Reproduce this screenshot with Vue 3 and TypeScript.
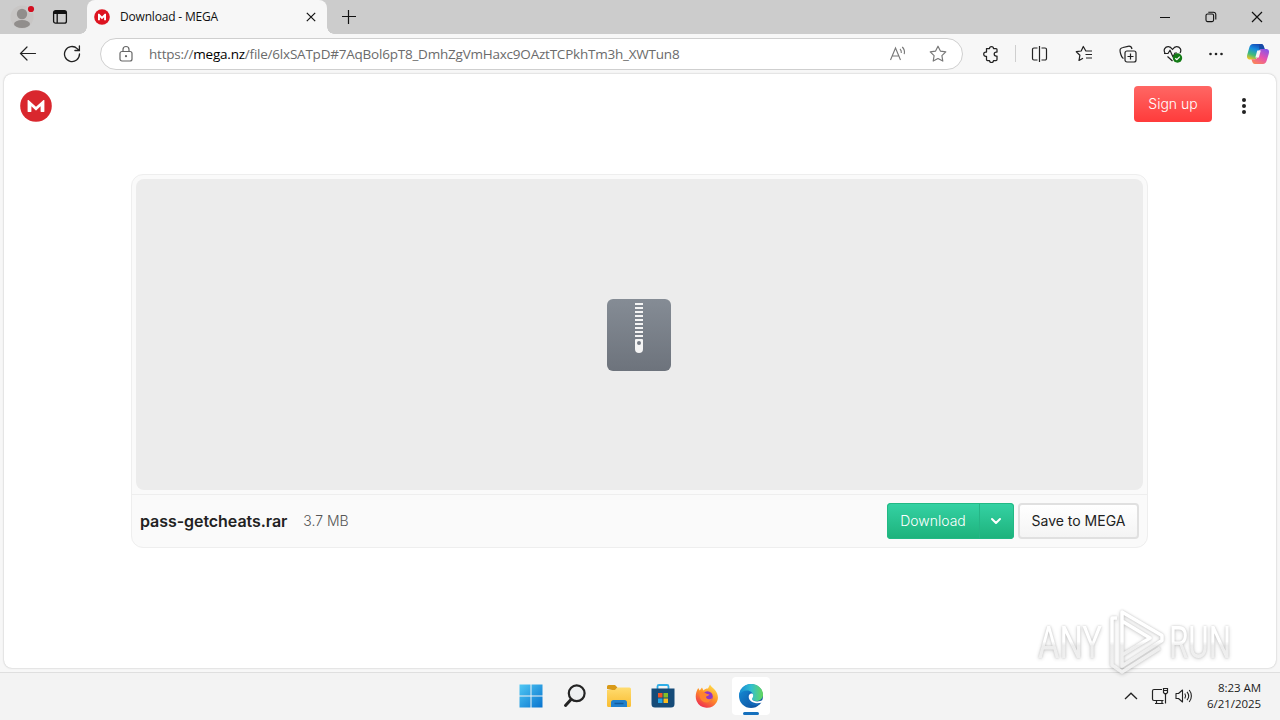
<script setup lang="ts">
const zipTeeth: number[] = [4, 8, 12, 16, 20, 24, 28, 32, 36]
const url = {
  scheme: 'https://',
  host: 'mega.nz',
  path: '/file/6lxSATpD#7AqBol6pT8_DmhZgVmHaxc9OAztTCPkhTm3h_XWTun8',
}
const file = { name: 'pass-getcheats.rar', size: '3.7 MB' }
</script>

<template>
  <div class="screen">
    <header class="tabstrip">
      <div class="slot profile">
        <svg width="28" height="28" viewBox="0 0 28 28">
          <circle cx="14" cy="14" r="11.5" fill="#c8c6c5" />
          <circle cx="14" cy="11" r="5.2" fill="#918e8c" />
          <ellipse cx="14" cy="21" rx="8" ry="4" fill="#918e8c" />
          <circle cx="23" cy="6" r="4.4" fill="#ccc" />
          <circle cx="23" cy="6" r="3.1" fill="#d30f20" />
        </svg>
      </div>
      <div class="slot tabmenu">
        <svg width="16" height="16" viewBox="0 0 16 16" fill="none" stroke="#111" stroke-width="1.3">
          <rect x="1.6" y="1.6" width="12.8" height="12.6" rx="2" />
          <path d="M2 3.5h12" stroke-width="3" />
          <path d="M5.2 4v10" />
        </svg>
      </div>
      <div class="tab">
        <svg width="16" height="16" viewBox="0 0 32 32">
          <circle cx="16" cy="16" r="15.6" fill="#dd1420" />
          <path d="M8 22.5V9.5h2.6l5.4 5.6 5.4-5.6H24v13h-3.8v-6.2L16 20.4l-4.200-4.100v6.200z" fill="#fff" />
        </svg>
        <span class="tab-title">Download - MEGA</span>
        <svg class="tab-close" width="10" height="10" viewBox="0 0 10 10" stroke="#111" stroke-width="1.2"><path d="M.8.8l8.400 8.400M9.200.8L.8 9.200" /></svg>
      </div>
      <svg class="plus" width="14" height="14" viewBox="0 0 14 14" stroke="#111" stroke-width="1.200"><path d="M6.500 0v14M0 6.500h14" /></svg>
      <div class="window-controls">
        <div class="control"><svg width="12" height="12" viewBox="0 0 12 12" stroke="#111"><path d="M1 6.500h10" /></svg></div>
        <div class="control"><svg width="12" height="12" viewBox="0 0 12 12" fill="none" stroke="#111" stroke-width="1.100"><rect x="1" y="3" width="7.600" height="7.600" rx="1.500" /><path d="M3.300 1.200H8.500a2.300 2.300 0 0 1 2.300 2.300v5" /></svg></div>
        <div class="control"><svg width="12" height="12" viewBox="0 0 12 12" stroke="#111" stroke-width="1.200"><path d="M1 1l10 10M11 1L1 11" /></svg></div>
      </div>
    </header>

    <nav class="toolbar">
      <div class="tool back"><svg width="18" height="18" viewBox="0 0 18 18" fill="none" stroke="#222" stroke-width="1.200" stroke-linecap="round"><path d="M16.500 8.500H1.800M8 2L1.500 8.500 8 15" /></svg></div>
      <div class="tool"><svg width="18" height="18" viewBox="0 0 18 18" fill="none" stroke="#222" stroke-width="1.300" stroke-linecap="round"><path d="M16.500 9a7.500 7.500 0 1 1-2.300-5.400L16 5.300M16.400 1v4.500h-4.500" /></svg></div>
      <div class="address">
        <svg class="lock" width="14" height="18" viewBox="0 0 14 18" fill="none" stroke="#666" stroke-width="1.200"><rect x="1" y="6.500" width="12" height="9.500" rx="2" /><path d="M4 6.300V4.500a3 3 0 0 1 6 0v1.800" /><circle cx="7" cy="11.200" r=".5" fill="#666" /></svg>
        <span class="url">{{ url.scheme }}<b>{{ url.host }}</b>{{ url.path }}</span>
        <svg class="read" width="18" height="18" viewBox="0 0 18 18" fill="none" stroke="#777" stroke-width="1.100"><path d="M1.500 15L6.500 3l5 12M3.300 11h6.500M11 4c1.200 1 1.500 2.300 1.300 4M13.200 2c2 1.800 2.700 4.400 2 7.200" /></svg>
        <svg class="star" width="18" height="18" viewBox="0 0 18 18" fill="none" stroke="#777" stroke-width="1.150" stroke-linejoin="round"><path d="M9 1.200l2.400 4.900 5.400.8-3.900 3.800.9 5.400L9 13.600l-4.800 2.500.9-5.400L1.200 6.900l5.400-.8z" /></svg>
      </div>
      <div class="tool puzzle"><svg width="18" height="18" viewBox="0 0 18 18" fill="none" stroke="#222" stroke-width="1.250" stroke-linejoin="round"><path d="M4.500 3.500h3a2 2 0 0 1 4 0H14a1 1 0 0 1 1 1V7h-.8a2 2 0 0 0 0 4h.8v3.500a1 1 0 0 1-1 1h-2.500a2 2 0 0 1-4 0H5.500a1 1 0 0 1-1-1V11.300h-.7a2.100 2.100 0 0 1 0-4.200h.7z" /></svg></div>
      <div class="divider"></div>
      <div class="tool"><svg width="18" height="18" viewBox="0 0 18 18" fill="none" stroke="#222" stroke-width="1.200"><path d="M6.500 3H3a1.500 1.500 0 0 0-1.500 1.500v9A1.500 1.500 0 0 0 3 15h3.500M10.500 3H14a1.500 1.500 0 0 1 1.500 1.500v9A1.500 1.500 0 0 1 14 15h-3.500M8.500 1v16" /></svg></div>
      <div class="tool"><svg width="18" height="18" viewBox="0 0 18 18" fill="none" stroke="#222" stroke-width="1.200" stroke-linejoin="round"><path d="M11 6.200L8.300 1.500 6.200 6 1.300 6.700l3.600 3.500-.9 5.300 4-2.200M10.500 6H17M10.500 9.500H17M11 13h6" /></svg></div>
      <div class="tool"><svg width="18" height="18" viewBox="0 0 18 18" fill="none" stroke="#222" stroke-width="1.200"><rect x="6" y="6" width="11" height="11" rx="2" /><path d="M11.500 8.500v6M8.500 11.500h6M4.500 13.500C2.500 12.500 2 10.500 1.300 7.500 .6 4.500 1.300 3 4 2.500l5-1.200c2.500-.5 3.500.5 4 2.700" /></svg></div>
      <div class="tool heart"><svg width="20" height="18" viewBox="0 0 20 18" fill="none" stroke="#222" stroke-width="1.200" stroke-linejoin="round"><path d="M2.500 9C-.6 4.500 2.500 1.500 5.500 1.700 7.500 1.800 9 3.800 9.500 4.500 10 3.800 11.500 1.800 13.500 1.700c3.400-.1 5.500 3 3.500 6.300M4.500 11.500L9.500 16M1 8.500h4l2-3.300L10 12l2-4h2" /><circle cx="14.500" cy="13" r="4.700" fill="#137b16" stroke="none" /><path d="M12.300 13.200l1.600 1.500 2.900-3" stroke="#fff" /></svg></div>
      <div class="tool"><svg width="16" height="4" viewBox="0 0 16 4" fill="#222"><circle cx="2.500" cy="2" r="1.300" /><circle cx="8" cy="2" r="1.300" /><circle cx="13.500" cy="2" r="1.300" /></svg></div>
      <div class="tool copilot">
        <svg width="24" height="22" viewBox="0 0 24 22">
          <defs>
            <linearGradient id="cpBlue" x1=".6" y1="0" x2=".2" y2="1"><stop offset="0" stop-color="#1748b5" /><stop offset=".35" stop-color="#168ee0" /><stop offset=".7" stop-color="#43bd78" /><stop offset="1" stop-color="#f3c525" /></linearGradient>
            <linearGradient id="cpPink" x1=".8" y1="0" x2=".2" y2="1"><stop offset="0" stop-color="#8756e8" /><stop offset=".5" stop-color="#e752ae" /><stop offset="1" stop-color="#fb8657" /></linearGradient>
          </defs>
          <path d="M7 1h8c2 0 2.500 1.500 3 3l.6 2h-3c-2 0-2.700 1.200-3.200 3L11 14c-.6 1.800-1.500 2.500-3 2.500H4C1 16.500.6 14 1.300 11.500l2-7C4 2.500 5 1 7 1z" fill="url(#cpBlue)" />
          <path d="M17 21H9c-2 0-2.500-1.500-3-3l-.5-1.700H8.600c2 0 2.600-1.200 3.200-3L13 8.500C13.600 6.500 14.500 6 16 6h4c3 0 3.500 2.300 2.700 5l-2 6.500C20 19.500 19 21 17 21z" fill="url(#cpPink)" />
          <path d="M13 1h2c2 0 2.500 1.500 3 3l.6 2h-3c-1 0-1.800.4-2.300 1z" fill="#174aa7" />
          <path d="M11.300 7.500h3.500l-2 7H9.300z" fill="#f9f3f5" />
        </svg>
      </div>
    </nav>

    <main class="page">
      <div class="site-header">
        <svg width="32" height="32" viewBox="0 0 32 32">
          <circle cx="16" cy="16" r="15.800" fill="#d9272e" />
          <path d="M7.600 21.500V10.400c0-.5.6-.6.9-.3L16 16.800l7.500-6.700c.3-.3.900-.2.900.3v11.100c0 .3-.2.500-.5.500h-2.800c-.3 0-.5-.2-.5-.5v-5.200L16.400 20.300c-.3.300-.5.300-.8 0l-4.200-4v5.200c0 .3-.2.500-.5.500H8.100c-.3 0-.5-.2-.5-.5z" fill="#fff" />
        </svg>
        <button class="btn signup">Sign up</button>
        <svg width="6" height="18" viewBox="0 0 6 18" fill="#222"><circle cx="3" cy="3" r="2" /><circle cx="3" cy="9" r="2" /><circle cx="3" cy="15" r="2" /></svg>
      </div>

      <section class="card">
        <div class="preview">
          <svg width="64" height="72" viewBox="0 0 64 72">
            <defs><linearGradient id="zip" x1="0" y1="0" x2="0" y2="1"><stop offset="0" stop-color="#858c95" /><stop offset="1" stop-color="#6d737c" /></linearGradient></defs>
            <rect width="64" height="72" rx="6" fill="url(#zip)" />
            <rect v-for="y in zipTeeth" :key="y" x="28" :y="y" width="8" height="2" fill="#f4f4f4" />
            <path d="M29 40h6a1 1 0 0 1 1 1v9a4 4 0 0 1-8 0v-9a1 1 0 0 1 1-1z" fill="#f4f4f4" />
            <circle cx="32" cy="44" r="2" fill="#747a83" />
          </svg>
        </div>
        <footer class="file-bar">
          <span class="file-name">{{ file.name }}</span>
          <span class="file-size">{{ file.size }}</span>
          <div class="download-group">
            <button class="btn download">Download</button>
            <button class="btn more"><svg width="12" height="8" viewBox="0 0 12 8" fill="none" stroke="#fff" stroke-width="2" stroke-linecap="round" stroke-linejoin="round"><path d="M2 2l4 4 4-4" /></svg></button>
          </div>
          <button class="btn save">Save to MEGA</button>
        </footer>
      </section>
    </main>

    <footer class="taskbar">
      <div class="apps">
        <div class="app">
          <svg width="24" height="24" viewBox="0 0 24 24"><defs><linearGradient id="win" x1="0" y1="0" x2="1" y2="1"><stop offset="0" stop-color="#50c8f4" /><stop offset="1" stop-color="#0873ce" /></linearGradient></defs><path d="M.5.500h11v11H.5zM12.500.500h11v11h-11zM.5 12.500h11v11H.5zM12.500 12.500h11v11h-11z" fill="url(#win)" /></svg>
        </div>
        <div class="app">
          <svg width="24" height="24" viewBox="0 0 24 24" fill="none" stroke="#242424"><circle cx="13.700" cy="9.300" r="7.900" fill="#eef0f1" stroke-width="2.200" /><path d="M8 15.500l-5.500 6" stroke-width="3" stroke-linecap="round" /></svg>
        </div>
        <div class="app">
          <svg width="26" height="24" viewBox="0 0 26 24"><defs><linearGradient id="fold" x1="0" y1="0" x2="0" y2="1"><stop offset="0" stop-color="#ffdc70" /><stop offset="1" stop-color="#f9bd32" /></linearGradient></defs><path d="M1 5V2.500A1.500 1.500 0 0 1 2.500 1H9l2.500 2.500L9 6.500z" fill="#d99a17" /><path d="M1 6h8l2.500-2.500h12A1.500 1.500 0 0 1 25 5v16.500a1.500 1.500 0 0 1-1.500 1.500h-21A1.500 1.500 0 0 1 1 21.500z" fill="url(#fold)" /><path d="M5 23v-4.500A2.500 2.500 0 0 1 7.500 16h11a2.500 2.500 0 0 1 2.500 2.500V23z" fill="#2180cc" /><path d="M8.500 19.500h9" stroke="#115a9d" stroke-width="1.500" /></svg>
        </div>
        <div class="app">
          <svg width="24" height="26" viewBox="0 0 24 26"><path d="M6.500 6V3.500A1.500 1.500 0 0 1 8 2h8a1.500 1.500 0 0 1 1.500 1.500V6" fill="none" stroke="#30aee7" stroke-width="1.800" /><path d="M.5 5.500h23V21a3.500 3.500 0 0 1-3.500 3.500H4A3.500 3.500 0 0 1 .5 21z" fill="#154b78" /><path d="M7 10h4.500v4.500H7z" fill="#ef5427" /><path d="M12.500 10H17v4.500h-4.500z" fill="#85be27" /><path d="M7 15.500h4.500V20H7z" fill="#22a5e8" /><path d="M12.500 15.500H17V20h-4.500z" fill="#fbbc1d" /></svg>
        </div>
        <div class="app">
          <svg width="24" height="24" viewBox="0 0 24 24"><defs><linearGradient id="fx" x1=".8" y1="0" x2=".2" y2="1"><stop offset="0" stop-color="#ffe34d" /><stop offset=".45" stop-color="#ff9526" /><stop offset="1" stop-color="#ed2455" /></linearGradient></defs><path d="M3.200 4l1.500 2.500L7 3.500l1.500 3C10 5 11.500 4.500 13 4.600L15 .500c1 2 3 3.200 5 5.500 3 3.500 4 8.500 1.500 12.500A11.300 11.300 0 0 1 1.600 17C-.2 12.500 1 8 3.200 4z" fill="url(#fx)" /><circle cx="12.500" cy="12.500" r="5.300" fill="#9136c6" /><path d="M5 8c3-.5 4.500.5 6.500 1.800l3 .6c-.5 1.500-2.500 1.400-3.500 2.300 0 2.500 3.500 3.400 6.500 1.300-1 4-6 5.800-9.500 3.500S4 11 5 8z" fill="#ff842d" /></svg>
        </div>
        <div class="app active">
          <svg width="26" height="26" viewBox="0 0 26 26"><defs><linearGradient id="edTop" x1="0" y1=".5" x2="1" y2=".5"><stop offset="0" stop-color="#1689d4" /><stop offset=".5" stop-color="#31bfd0" /><stop offset="1" stop-color="#65d85a" /></linearGradient><linearGradient id="edLow" x1="0" y1="0" x2="1" y2="1"><stop offset="0" stop-color="#1693dd" /><stop offset="1" stop-color="#0c4594" /></linearGradient></defs><circle cx="13" cy="13" r="12" fill="url(#edLow)" /><path d="M1.200 12C2 5.500 7 1 13 1c7 0 12 5 12 10.500 0 4-3 6.500-6.500 6.500-3 0-4.500-1-4.500-2 0-.8 1.200-1.200 1.200-3.200C15.200 10 12.500 7.500 9 7.500c-3.500 0-6.500 2-7.800 4.500z" fill="url(#edTop)" /><path d="M10 11c-2.500 5 1 11 6 11.500 3 .3 5.500-.8 7-2.500-2.500 1.200-6 1.200-8.500-.7-2.500-1.800-2.500-4-1.500-5.300.8-1.100 2.200-1 2-2.500-.2-2-3.700-3-5-.5z" fill="#126abb" /><path d="M14 16c0-.8 1.200-1.200 1.200-3.200 0-.8-.2-1.500-.5-2-2.500-.8-4 1-4 3.200 0 4.500 6.500 7.500 12.500 5.800.6-.3 1.400-1.500 1.700-2.700-4 2.200-10.900 1.400-10.900-1.100z" fill="#fff" /></svg>
          <span class="indicator"></span>
        </div>
      </div>
      <div class="tray">
        <svg width="14" height="8" viewBox="0 0 14 8" fill="none" stroke="#222" stroke-width="1.300"><path d="M1 7l6-5.800L13 7" /></svg>
        <svg class="network" width="18" height="18" viewBox="0 0 18 18" fill="none" stroke="#222" stroke-width="1.200"><path d="M11 2.500H3a1.500 1.500 0 0 0-1.500 1.500v8A1.500 1.500 0 0 0 3 13.500h9.500M5.500 13.500v2.800M11 13.500v2.800M4 16.500h8.500M12.500 1.500h4v4l-1 1.200h-2l-1-1.200zM12.500 3.500h4M14.500 7v9.500" /></svg>
        <svg class="sound" width="18" height="16" viewBox="0 0 18 16" fill="none" stroke="#222" stroke-width="1.100" stroke-linejoin="round"><path d="M1 5.500h2.500L7.500 2v12l-4-3.500H1zM9.800 5.500c1 1.500 1 3.500 0 5M12 3.800c2 2.500 2 6 0 8.400M14.200 2c2.900 3.500 2.900 8.500 0 12" /></svg>
        <div class="clock"><span class="time">8:23 AM</span><span class="date">6/21/2025</span></div>
      </div>
    </footer>

    <svg class="watermark" width="220" height="76" viewBox="0 0 220 76">
      <defs>
        <linearGradient id="fade" gradientUnits="userSpaceOnUse" x1="0" y1="5" x2="0" y2="70"><stop offset="0" stop-color="#fff" /><stop offset=".5" stop-color="#fff" /><stop offset=".56" stop-color="#ebebeb" /><stop offset="1" stop-color="#f0f0f0" /></linearGradient>
      </defs>
      <g class="mark">
        <text x="8" y="54" textLength="64" lengthAdjust="spacingAndGlyphs" fill="url(#fade)">ANY</text>
        <text x="139" y="54" textLength="62" lengthAdjust="spacingAndGlyphs" fill="url(#fade)">RUN</text>
        <path d="M92 8L132 31.500v5L92 62zM92 17v34l28-17zM87 14h-5v47l10 7 38-24" fill="none" stroke="url(#fade)" stroke-width="3.500" stroke-linejoin="round" />
      </g>
    </svg>
  </div>
</template>

<style>
body { margin: 0; overflow: hidden; }
</style>

<style scoped>
.screen { position: relative; width: 1280px; height: 720px; display: flex; flex-direction: column; overflow: hidden; background: #f7f7f7; font-family: "Open Sans", "Noto Sans", sans-serif; color: #111; }
svg { display: block; flex: none; }
.tabstrip { height: 34px; flex: none; display: flex; align-items: center; background: #ccc; }
.slot { display: flex; justify-content: center; flex: none; }
.profile { width: 44px; }
.tabmenu { width: 32px; }
.tab { width: 240px; height: 34px; box-sizing: border-box; margin-left: 11px; padding: 0 11px 0 7px; display: flex; align-items: center; background: #f7f7f7; border-radius: 8px 8px 0 0; position: relative; }
.tab::before, .tab::after { content: ""; position: absolute; bottom: 0; width: 7px; height: 7px; }
.tab::before { left: -7px; background: radial-gradient(circle at 0 0, #ccc 6.5px, #f7f7f7 7px); }
.tab::after { right: -7px; background: radial-gradient(circle at 100% 0, #ccc 6.5px, #f7f7f7 7px); }
.tab-title { margin-left: 10px; font-size: 12px; line-height: 16px; letter-spacing: -.18px; white-space: nowrap; }
.tab-close { margin-left: auto; }
.plus { margin-left: 15px; }
.window-controls { display: flex; margin-left: auto; }
.control { width: 46px; display: flex; justify-content: center; }
.toolbar { height: 40px; flex: none; box-sizing: border-box; padding-bottom: 1px; display: flex; align-items: center; background: #f7f7f7; }
.tool { width: 44px; flex: none; display: flex; justify-content: center; }
.back { margin-left: 6px; }
.address { width: 863px; height: 32px; flex: none; box-sizing: border-box; margin-left: 6px; padding: 0 15px 0 18px; border: 1px solid #cfcfcf; border-radius: 16px; background: #fff; display: flex; align-items: center; }
.url { margin-left: 16px; font-size: 13.5px; line-height: 18px; letter-spacing: -.22px; color: #6b6b6b; white-space: nowrap; }
.url b { font-weight: 400; color: #000; }
.read { margin-left: auto; }
.star { margin-left: 22px; }
.puzzle { margin-left: 6px; }
.divider { width: 1px; height: 17px; margin: 0 2px; background: #cfcfcf; }
.heart svg { margin-left: 2px; }
.copilot { width: 40px; }
.page { width: 1272px; height: 594px; flex: none; box-sizing: border-box; margin-left: 4px; background: #fff; border-radius: 8px; box-shadow: 0 0 2px rgba(0, 0, 0, .28); font-family: Inter, "Liberation Sans", sans-serif; }
.site-header { height: 64px; display: flex; align-items: center; padding: 0 29px 0 16px; }
.btn { box-sizing: border-box; height: 36px; padding: 0; border: 0; font: 400 14px/36px Inter, sans-serif; display: flex; align-items: center; justify-content: center; white-space: nowrap; }
.signup { width: 78px; margin: 0 29px 4px auto; color: #fff; border-radius: 4px; background: linear-gradient(#ff6764, #ff3b3b); font-weight: 300; }
.card { width: 1017px; height: 374px; box-sizing: border-box; margin: 36px 0 0 127px; border: 1px solid #eee; border-radius: 12px; background: #fafafa; overflow: hidden; }
.preview { height: 311px; margin: 4px 4px 4px 4px; display: flex; align-items: center; justify-content: center; border-radius: 8px; background: #ececec; }
.preview svg { margin-right: 1px; }
.file-bar { height: 52px; border-top: 1px solid #eee; display: flex; align-items: center; padding: 0 8px; }
.file-name { font-size: 16px; line-height: 24px; font-weight: 600; letter-spacing: -.06px; color: #222; white-space: nowrap; }
.file-size { margin-left: 16px; font-size: 14px; line-height: 24px; font-weight: 300; color: #555; }
.download-group { display: flex; margin-left: auto; border-radius: 4px; overflow: hidden; background: linear-gradient(#35d2a4, #1db27b); box-shadow: inset 0 0 0 1px #22b984; }
.download { width: 92px; background: none; color: #fff; font-weight: 300; }
.more { width: 35px; padding-right: 2px; background: none; border-left: 1px solid #26b586; }
.save { width: 121px; margin-left: 4px; border: 2px solid #e0e0e0; border-radius: 4px; color: #222; background: linear-gradient(#fff, #f4f4f4); }
.taskbar { position: relative; height: 48px; flex: none; box-sizing: border-box; margin-top: 4px; padding-bottom: 2px; border-top: 1px solid #dfdfdf; background: #f3f3f3; display: flex; align-items: center; }
.apps { display: flex; margin-left: 508.5px; }
.app { width: 44px; height: 40px; display: flex; align-items: center; justify-content: center; }
.app.active { position: relative; width: 38px; height: 38px; margin: 1px 3px; border-radius: 4px; background: #fff; }
.indicator { position: absolute; bottom: 0; left: 11px; width: 16px; height: 3px; border-radius: 2px; background: #1570bd; }
.tray { display: flex; align-items: center; margin-left: auto; padding-right: 19px; }
.network { margin-left: 13px; }
.sound { margin-left: 6px; }
.clock { display: flex; flex-direction: column; align-items: flex-end; width: 68px; font-size: 11.5px; line-height: 16px; color: #1c1c1c; letter-spacing: -.05px; }
.watermark { position: absolute; left: 1030px; top: 604px; overflow: visible; pointer-events: none; }
.mark { filter: drop-shadow(0 0 1px rgba(0, 0, 0, .2)) drop-shadow(0 1px 2px rgba(0, 0, 0, .18)); opacity: .85; }
.mark text { font: 400 45px "Roboto", sans-serif; }
</style>
